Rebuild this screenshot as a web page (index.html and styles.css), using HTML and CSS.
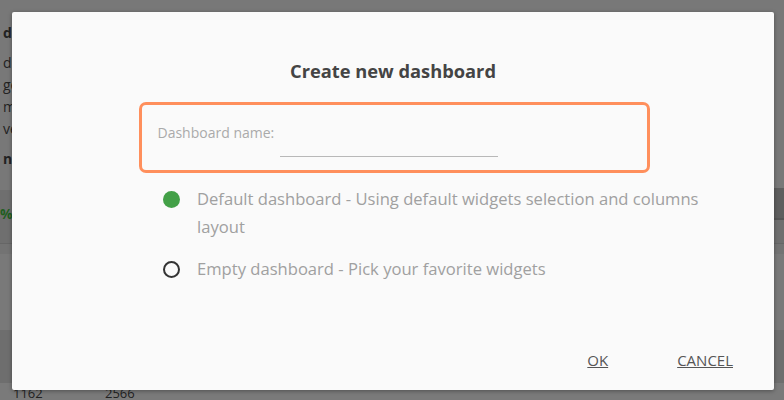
FILE: index.html
```html
<!DOCTYPE html>
<html>
<head>
<meta charset="utf-8">
<link rel="stylesheet" href="styles.css">
</head>
<body>
<div class="page">
  <div class="bg-top">
    <div class="bg-line bold l1">d</div>
    <div class="bg-line l2">d.</div>
    <div class="bg-line l3">ge</div>
    <div class="bg-line l4">me</div>
    <div class="bg-line l5">ve</div>
    <div class="bg-line bold l6">nev</div>
  </div>
  <div class="bg-band">
    <div class="bg-green">%</div>
  </div>
  <div class="bg-mid"></div>
  <div class="bg-band2"></div>
  <div class="bg-bottom">
    <span class="num n1">1162</span>
    <span class="num n2">2566</span>
  </div>

  <div class="dialog">
    <h2 class="title">Create new dashboard</h2>
    <div class="name-box">
      <div class="name-label">Dashboard name:</div>
      <div class="name-input"></div>
    </div>
    <div class="options">
      <div class="option">
        <span class="radio checked"></span>
        <span class="option-text">Default dashboard - Using default widgets selection and columns layout</span>
      </div>
      <div class="option">
        <span class="radio"></span>
        <span class="option-text">Empty dashboard - Pick your favorite widgets</span>
      </div>
    </div>
    <div class="actions">
      <a class="btn">OK</a>
      <a class="btn">CANCEL</a>
    </div>
  </div>
</div>
</body>
</html>
```

FILE: styles.css
```css
* { box-sizing: border-box; }
html, body { margin: 0; padding: 0; }
body {
  width: 784px;
  height: 400px;
  overflow: hidden;
  font-family: "Open Sans", "Noto Sans", sans-serif;
  background: #777777;
}
.page {
  position: relative;
  width: 784px;
  height: 400px;
  overflow: hidden;
  background: #777777;
}
.bg-top {
  height: 190px;
  padding-top: 22px;
  padding-left: 3px;
  background: #787878;
  color: #222;
  font-size: 14px;
}
.bg-line { height: 22px; line-height: 22px; }
.bg-line.bold { font-weight: 700; }
.l1 { margin-bottom: 8px; }
.l5 { margin-bottom: 8px; }
.bg-band {
  height: 54px;
  background: #6f6f6f;
  border-bottom: 1px solid #666;
  padding-top: 14px;
}
.bg-band::after {
  content: "";
  display: block;
  position: absolute;
  right: 0;
  top: 188px;
  width: 12px;
  height: 30px;
  background: #5e5e5e;
  border-bottom: 2px solid #555;
}
.bg-green { color: #1f5e1f; font-weight: 700; font-size: 14px; }
.bg-mid {
  height: 86px;
  background: #797979;
  border-top: 10px solid #737373;
}
.bg-band2 {
  height: 53px;
  background: #6e6e6e;
}
.bg-bottom {
  height: 22px;
  background: #7a7a7a;
  position: relative;
  color: #222;
  font-size: 13px;
}
.num { position: absolute; top: 1px; line-height: 18px; }
.n1 { left: 13px; }
.n2 { left: 105px; }

.dialog {
  position: absolute;
  left: 12px;
  top: 12px;
  width: 762px;
  height: 378px;
  background: #fafafa;
  border-radius: 2px;
  box-shadow: 0 1px 4px rgba(0,0,0,0.35);
  display: flex;
  flex-direction: column;
  align-items: center;
}
.title {
  margin: 47px 0 0;
  font-size: 18.3px;
  font-weight: 700;
  color: #444;
  line-height: 24px;
}
.name-box {
  margin-top: 19px;
  margin-left: 2px;
  width: 511px;
  height: 71px;
  border: 3px solid #ff8f5c;
  border-radius: 7px;
  padding: 18px 0 0 16px;
  display: flex;
  flex-direction: column;
}
.name-label {
  font-size: 14px;
  color: #aaa;
  line-height: 20px;
}
.name-input {
  margin-top: 13px;
  margin-left: 122px;
  width: 218px;
  height: 1px;
  border-bottom: 1px solid #b8b8b8;
}
.options {
  align-self: stretch;
  padding-left: 151px;
  padding-right: 50px;
  margin-top: 12px;
}
.option {
  display: flex;
  align-items: flex-start;
  margin-bottom: 14px;
}
.radio {
  flex: none;
  width: 17px;
  height: 17px;
  border-radius: 50%;
  border: 2px solid #333;
  margin-top: 6px;
  margin-right: 17px;
}
.radio.checked {
  border: none;
  background: #43a047;
}
.option-text {
  font-size: 16.6px;
  line-height: 28px;
  color: #a0a0a0;
}
.actions {
  margin-top: auto;
  margin-bottom: 20px;
  align-self: flex-end;
  display: flex;
  gap: 69px;
  padding-right: 41px;
}
.btn {
  font-size: 15px;
  color: #555;
  text-decoration: underline;
  line-height: 20px;
}
```
